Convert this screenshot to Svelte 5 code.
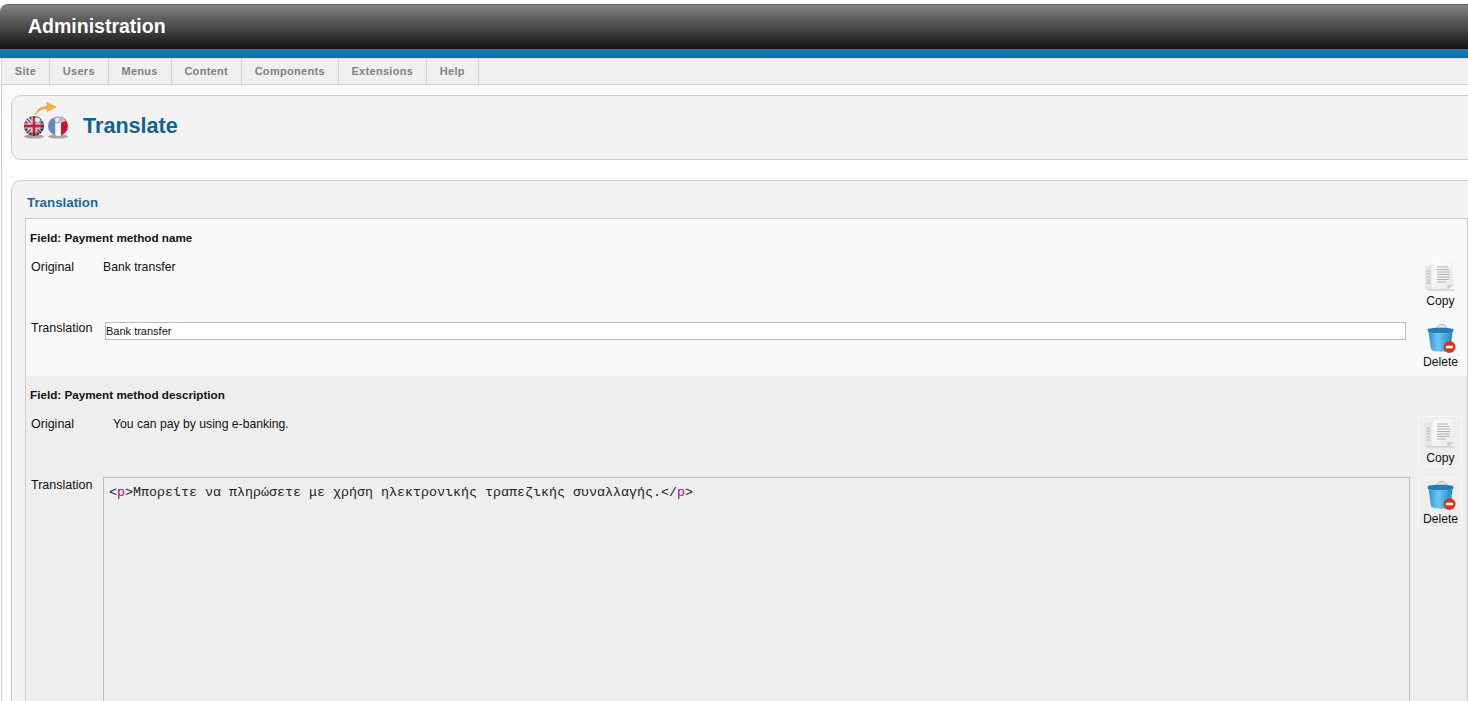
<script>
	const menu = ['Site', 'Users', 'Menus', 'Content', 'Components', 'Extensions', 'Help'];
</script>

{#snippet copyBtn()}
	<button class="tool" type="button">
		<svg width="32" height="31" viewBox="0 0 32 31">
			<defs>
				<linearGradient id="pg" x1="0" y1="0" x2="1" y2="1">
					<stop offset="0" stop-color="#fdfdfd" />
					<stop offset="1" stop-color="#e8e8e8" />
				</linearGradient>
				<linearGradient id="sh" x1="0" y1="0" x2="0" y2="1">
					<stop offset="0" stop-color="#c8c8c8" stop-opacity="0.9" />
					<stop offset="1" stop-color="#c8c8c8" stop-opacity="0" />
				</linearGradient>
			</defs>
			<path d="M0.5 6 L11 4 L11 27 L0.5 28 Z" fill="#e6e6e6" stroke="#d8d8d8" stroke-width="0.5" />
			<path d="M6 4 L14 2.5 L14 27.5 L6 28.5 Z" fill="#f4f4f4" stroke="#d8d8d8" stroke-width="0.5" />
			<path d="M9 2 L27 0.5 L29 24 L22 25 L22.5 28.5 L9 28.5 Z" fill="url(#pg)" />
			<path d="M22.5 28.5 L29 24 L22 24.5 Z" fill="#cfcfcf" />
			<g stroke="#b0b0b0" stroke-width="1.1">
				<path d="M12 6 H23 M12 8.5 H24 M12 11 H25 M12 13.5 H25 M12 16 H25 M12 18.5 H24 M12 21 H21" />
				<path d="M2 10 H5 M2 13 H5 M2 16 H5 M2 19 H5 M2 22 H5" />
			</g>
			<rect x="2" y="28" width="27" height="3" fill="url(#sh)" />
		</svg>
		<span>Copy</span>
	</button>
{/snippet}

{#snippet deleteBtn()}
	<button class="tool" type="button">
		<svg class="bin" width="30" height="30" viewBox="0 0 30 30">
			<defs>
				<linearGradient id="bin" x1="0" y1="0" x2="1" y2="0">
					<stop offset="0" stop-color="#2a93cf" />
					<stop offset="0.4" stop-color="#6cc6f0" />
					<stop offset="1" stop-color="#2188c2" />
				</linearGradient>
			</defs>
			<path d="M11 5 C12 0.5 18 0.5 20 3.5 L21.5 7 L11 7 Z" fill="#e6e6e6" stroke="#9a9a9a" stroke-width="0.7" />
			<path d="M1.5 6 C8 4.2 21 4.2 27.5 6 L27 9 C21 11 8 11 2 9 Z" fill="#1f7fb6" />
			<path d="M2.5 9 C8 11 21 11 26.5 9 L24.5 26 C24 29.5 6 29.5 5 26 Z" fill="url(#bin)" />
			<circle cx="23.5" cy="24" r="6" fill="#d7381b" />
			<rect x="20" y="22.7" width="7" height="2.6" rx="0.6" fill="#ffffff" />
		</svg>
		<span>Delete</span>
	</button>
{/snippet}

<div class="page">
	<header class="top"><h1>Administration</h1></header>
	<div class="strip"></div>

	<nav class="menu">
		{#each menu as item}
			<span class="item">{item}</span>
		{/each}
	</nav>

	<main class="content">
		<section class="titlebox">
			<svg class="logo" width="48" height="42" viewBox="22 98 48 42">
				<defs>
					<radialGradient id="shade" cx="0.45" cy="0.4" r="0.62">
						<stop offset="0.55" stop-color="#000" stop-opacity="0" />
						<stop offset="1" stop-color="#000" stop-opacity="0.5" />
					</radialGradient>
					<clipPath id="ukc"><circle cx="34" cy="125" r="10" /></clipPath>
					<clipPath id="frc"><circle cx="58" cy="125" r="10" /></clipPath>
				</defs>
				<ellipse cx="34" cy="135.5" rx="10" ry="2" fill="#8c8c8c" opacity="0.75" />
				<ellipse cx="58" cy="135.5" rx="10" ry="2" fill="#8c8c8c" opacity="0.75" />
				<g clip-path="url(#ukc)">
					<rect x="24" y="115" width="20" height="20" fill="#46598a" />
					<path d="M24 115 L44 135 M44 115 L24 135" stroke="#eee" stroke-width="4" />
					<path d="M24 115 L44 135 M44 115 L24 135" stroke="#c22138" stroke-width="1.4" />
					<path d="M34 115 V135 M24 125 H44" stroke="#eee" stroke-width="5" />
					<path d="M34 115 V135 M24 125 H44" stroke="#c22138" stroke-width="2.8" />
				</g>
				<circle cx="34" cy="125" r="10" fill="url(#shade)" />
				<circle cx="37.5" cy="119" r="3" fill="#e8e8e8" stroke="#666" stroke-width="0.7" />
				<g clip-path="url(#frc)">
					<rect x="48" y="115" width="7.5" height="20" fill="#6a86c4" />
					<rect x="55.5" y="115" width="5.5" height="20" fill="#fafafa" />
					<rect x="61" y="115" width="7" height="20" fill="#c8142e" />
				</g>
				<path d="M52 117 A10 10 0 0 1 66 120 L60 122 Z" fill="#e2e6ee" opacity="0.8" />
				<circle cx="57.5" cy="119" r="3" fill="#ececec" stroke="#666" stroke-width="0.7" />
				<path d="M35.5 113.5 C37 108 41 105.5 47 105.5 L47 101.5 L56 106 L47 110.5 L47 107.5 C42 107.5 38.5 109.5 35.5 113.5 Z" fill="#f4ac4a" stroke="#d98a20" stroke-width="0.5" />
			</svg>
			<h2>Translate</h2>
		</section>

		<section class="panel">
			<h3>Translation</h3>
			<div class="fields">
				<div class="field">
					<h4>Field: Payment method name</h4>
					<div class="line">
						<span class="lbl">Original</span>
						<div class="val val-a">Bank transfer</div>
						{@render copyBtn()}
					</div>
					<div class="line">
						<span class="lbl">Translation</span>
						<input class="text" type="text" value="Bank transfer" />
						{@render deleteBtn()}
					</div>
				</div>

				<div class="field alt">
					<h4>Field: Payment method description</h4>
					<div class="line">
						<span class="lbl">Original</span>
						<div class="val val-b">You can pay by using e-banking.</div>
						{@render copyBtn()}
					</div>
					<div class="line">
						<span class="lbl">Translation</span>
						<div class="editor">&lt;<span class="tag">p</span>&gt;Μπορείτε να πληρώσετε με χρήση ηλεκτρονικής τραπεζικής συναλλαγής.&lt;/<span class="tag">p</span>&gt;</div>
						{@render deleteBtn()}
					</div>
				</div>
			</div>
		</section>
	</main>
</div>

<style>
	:global(html),
	:global(body) {
		margin: 0;
		height: 100%;
		overflow: hidden;
		background: #fff;
	}
	.page {
		width: 1468px;
		height: 701px;
		overflow: hidden;
		padding-top: 4px;
		box-sizing: border-box;
		font-family: 'Liberation Sans', Arial, sans-serif;
		font-size: 12.2px;
		color: #111;
	}
	.top {
		height: 45px;
		box-sizing: border-box;
		padding-left: 28px;
		border-radius: 8px 0 0 0;
		border-top: 1px solid #666;
		background: linear-gradient(#828282, #121212);
		display: flex;
		align-items: center;
	}
	.top h1 {
		margin: 0 0 1px;
		color: #fff;
		font-size: 19.5px;
		font-weight: bold;
	}
	.strip {
		height: 9px;
		background: linear-gradient(#1283bd, #0f6f9f);
		border-bottom: 1px solid #d8d8d8;
	}
	.menu {
		display: flex;
		height: 25px;
		margin-left: 1px;
		background: #f0f0f0;
		border-left: 1px solid #d0d0d0;
		border-bottom: 1px solid #cfcfcf;
	}
	.item {
		display: flex;
		align-items: center;
		padding: 0 12.8px 2px;
		border-right: 1px solid #d0d0d0;
		color: #808080;
		font-size: 11px;
		font-weight: bold;
		letter-spacing: 0.3px;
	}
	.content {
		margin-left: 1px;
		border-left: 1px solid #d0d0d0;
		padding: 10px 0 0 9px;
		height: 620px;
		background: linear-gradient(#fbfbfb, #fff 80px);
	}
	.titlebox {
		display: flex;
		align-items: flex-start;
		height: 65px;
		box-sizing: border-box;
		margin-right: -20px;
		padding: 2px 0 0 10px;
		border: 1px solid #ccc;
		border-radius: 10px 0 0 10px;
		background: #f3f3f3;
	}
	.logo {
		flex: none;
		margin-top: 1px;
	}
	.titlebox h2 {
		margin: 15px 0 0 13px;
		color: #146295;
		font-size: 21.6px;
		line-height: 26px;
		font-weight: bold;
	}
	.panel {
		margin: 20px -20px 0 0;
		padding: 0 0 0 13px;
		height: 540px;
		border: 1px solid #ccc;
		border-radius: 10px 0 0 0;
		background: #f3f3f3;
	}
	.panel h3 {
		margin: 0;
		height: 37px;
		padding-left: 2px;
		line-height: 44px;
		color: #1f6697;
		font-size: 13.33px;
		font-weight: bold;
	}
	.fields {
		width: 1443px;
		box-sizing: border-box;
		border: 1px solid #ccc;
	}
	.field {
		background: #f9f9f9;
		height: 157px;
		padding-right: 5px;
	}
	.field.alt {
		background: #eee;
		height: 400px;
	}
	.field h4 {
		margin: 0;
		height: 40px;
		padding: 12px 0 0 4px;
		box-sizing: border-box;
		font-size: 11.7px;
		line-height: 14px;
		font-weight: bold;
		color: #111;
	}
	.line {
		display: grid;
		grid-template-columns: 77px 1fr 44px;
		align-items: start;
		margin-bottom: 10px;
	}
	.lbl {
		padding: 1px 0 0 5px;
		font-size: 12.5px;
		line-height: 14px;
	}
	.val {
		line-height: 14px;
		padding-top: 1px;
	}
	.val-b {
		padding-left: 10px;
	}
	.text {
		margin: 2px 12px 0 2px;
		height: 18px;
		box-sizing: border-box;
		padding: 0;
		border: 1px solid #bbb;
		border-radius: 0;
		background: #fff;
		font: 11px 'Liberation Sans', Arial, sans-serif;
		color: #111;
		min-width: 0;
		outline: none;
	}
	.editor {
		height: 400px;
		margin-right: 8px;
		padding: 7px 0 0 5px;
		border: 1px solid #bbb;
		box-sizing: border-box;
		font-family: 'Liberation Mono', monospace;
		font-size: 13.33px;
		line-height: 15px;
		white-space: pre;
		color: #222;
	}
	.tag {
		color: #a0a;
	}
	.tool {
		display: flex;
		flex-direction: column;
		align-items: center;
		width: 44px;
		height: 51px;
		box-sizing: border-box;
		padding: 1px 0 0 1px;
		background: transparent;
		border: 1px solid #f8f8f8;
		font: 12.2px 'Liberation Sans', Arial, sans-serif;
		color: #111;
		white-space: nowrap;
	}
	.tool span {
		line-height: 14px;
		margin-top: 2px;
	}
	.bin {
		margin: 1px 0 0 1px;
	}
</style>
